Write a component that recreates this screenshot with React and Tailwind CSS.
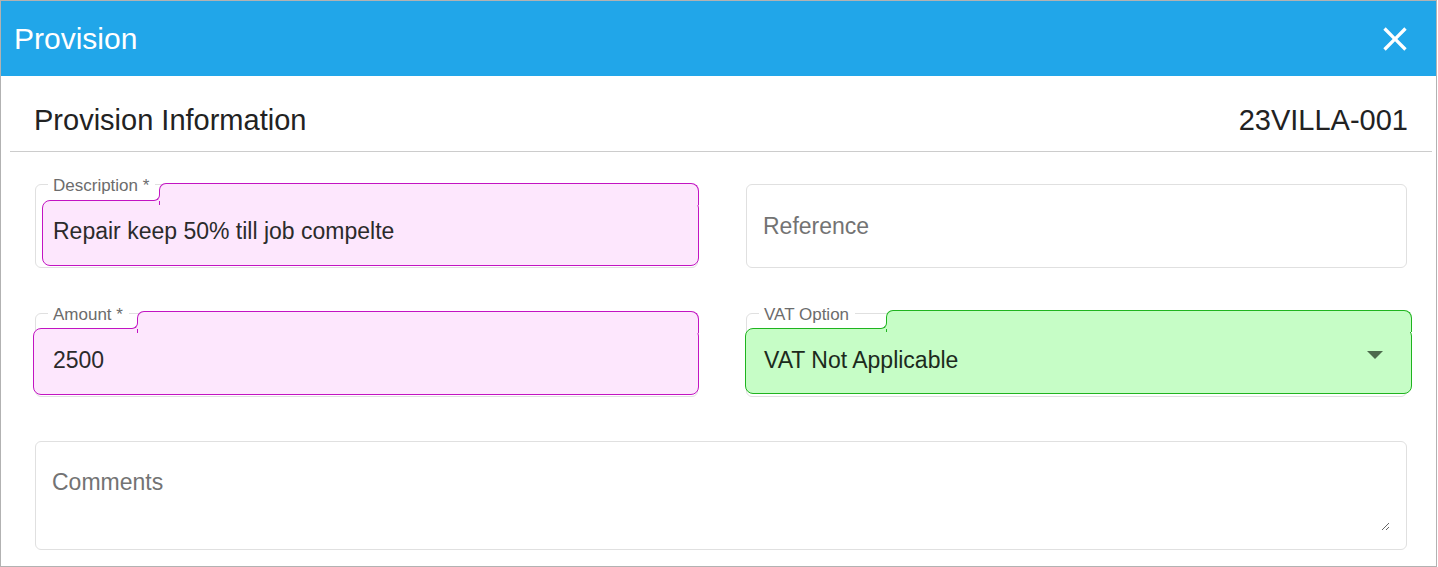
import React from "react";

const font = { fontFamily: '"Liberation Sans", Arial, sans-serif' };

// Outlined field with a coloured "filled" overlay shape (main box + label tab)
const FilledField = ({ label, value, tone, mainPos, tabPos, cornerPos, arrow }) => {
  const fill = tone === "green" ? "bg-[#c6fdc6]" : "bg-[#fde7fd]";
  const line = tone === "green" ? "border-[#1fb41f]" : "border-[#c214c2]";
  return (
    <div className="relative h-[84px] rounded-[6px] border border-[#e0e0e0]">
      {/* filled overlay */}
      <div className={`absolute z-[1] rounded-[8px] border ${line} ${fill} ${mainPos}`}></div>
      <div className={`absolute z-[2] h-[22px] rounded-tl-[7px] rounded-tr-[8px] border-t border-l border-r ${line} ${fill} ${tabPos}`}></div>
      {/* concave corner where tab meets the box */}
      <div className={`absolute z-[3] h-[7px] w-[7px] ${fill} ${cornerPos}`}>
        <div className={`h-full w-full rounded-br-[6px] border-r border-b bg-white ${line}`}></div>
      </div>
      {/* label in notch */}
      <span className="absolute left-[12px] top-[-9px] z-[4] bg-white pl-[5px] pr-[6px] text-[17px] leading-[20px] text-[#6c6c6c]">
        {label}
      </span>
      <div className="relative z-[5] flex h-full items-center justify-between pl-[17px] pr-[22px]">
        <span className={`pt-[10px] text-[23px] leading-[26px] ${tone === "green" ? "text-[#1c2a1c]" : "text-[#2b2b2b]"}`}>
          {value}
        </span>
        {arrow && (
          <svg width="16" height="8" viewBox="0 0 16 8" className="mr-[1px]">
            <polygon points="0,0 16,0 8,8" fill="#4d6a4d" />
          </svg>
        )}
      </div>
    </div>
  );
};

const App = () => {
  return (
    <div
      className="flex h-[567px] w-[1437px] flex-col overflow-hidden border border-[#b2b2b2] bg-white"
      style={font}
    >
      {/* Dialog title bar */}
      <div className="flex h-[75px] shrink-0 items-center justify-between bg-[#21a6e9] pl-[13px] pr-[21px]">
        <span className="text-[30px] leading-none text-white">Provision</span>
        <svg width="40" height="40" viewBox="0 0 24 24" fill="white">
          <path d="M19 6.41 17.59 5 12 10.59 6.41 5 5 6.41 10.59 12 5 17.59 6.41 19 12 13.41 17.59 19 19 17.59 13.41 12z" />
        </svg>
      </div>

      {/* Section heading */}
      <div className="pl-[9px] pr-[4px]">
        <div className="flex h-[76px] items-center justify-between border-b border-[#cccccc] pl-[24px] pr-[24px] pt-[13px]">
          <span className="text-[29px] leading-[34px] text-[#222222]">Provision Information</span>
          <span className="text-[29px] leading-[34px] text-[#222222]">23VILLA-001</span>
        </div>
      </div>

      {/* Form */}
      <div className="flex flex-col gap-y-[44px] pl-[34px] pr-[29px] pt-[32px]">
        <div className="grid grid-cols-[663px_1fr] gap-x-[48px] gap-y-[45px]">
          <FilledField
            label="Description *"
            value="Repair keep 50% till job compelte"
            tone="pink"
            mainPos="left-[6px] top-[15px] right-[-2px] bottom-[1px]"
            tabPos="left-[123px] top-[-2px] right-[-2px]"
            cornerPos="left-[117px] top-[9px]"
          />
          <div className="flex h-[84px] items-center rounded-[6px] border border-[#e0e0e0] pl-[16px]">
            <span className="text-[23px] leading-[26px] text-[#737373]">Reference</span>
          </div>
          <FilledField
            label="Amount *"
            value="2500"
            tone="pink"
            mainPos="left-[-3px] top-[14px] right-[-2px] bottom-[1px]"
            tabPos="left-[101px] top-[-3px] right-[-2px]"
            cornerPos="left-[95px] top-[8px]"
          />
          <FilledField
            label="VAT Option"
            value="VAT Not Applicable"
            tone="green"
            arrow
            mainPos="left-[-2px] top-[14px] right-[-6px] bottom-[2px]"
            tabPos="left-[139px] top-[-4px] right-[-6px]"
            cornerPos="left-[133px] top-[8px]"
          />
        </div>

        <div className="h-[109px] rounded-[6px] border border-[#e0e0e0] pb-[18px] pl-[16px] pr-[16px] pt-[27px]">
          <textarea
            placeholder="Comments"
            className="block h-[62px] w-full border-0 bg-transparent p-0 text-[23px] leading-[26px] text-[#2b2b2b] outline-none placeholder:text-[#737373]"
            style={font}
          />
        </div>
      </div>
    </div>
  );
};

export default App;
